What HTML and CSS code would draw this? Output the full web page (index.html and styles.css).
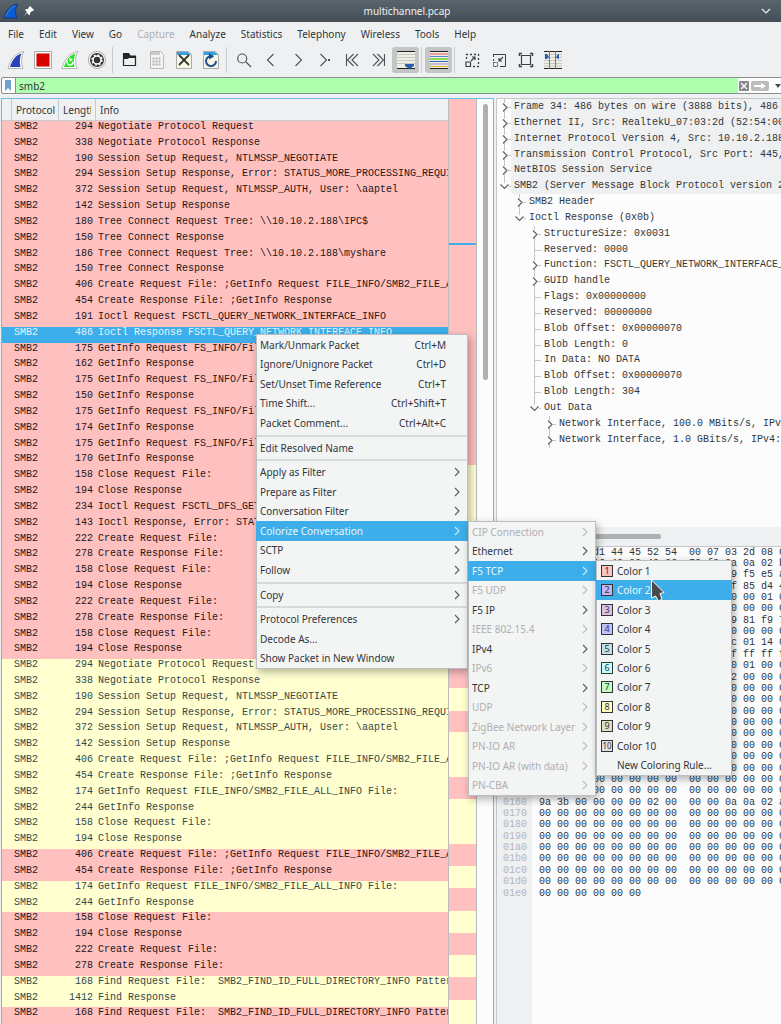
FILE: index.html
```html
<!DOCTYPE html>
<html lang="en">
<head>
    <meta charset="UTF-8">
    <title>multichannel.pcap</title>
    <link rel="stylesheet" href="styles.css">
</head>
<body>
<svg class="defs" aria-hidden="true">
    <symbol id="chev" viewBox="0 0 8 10"><path d="M2 1l4 4-4 4" fill="none" stroke="currentColor" stroke-width="1.1"/></symbol>
    <symbol id="closed" viewBox="0 0 12 16"><path d="M5.5 0v4M5.5 12v4M9 8.500h3" stroke="#c4c6c8" fill="none"/><path d="M4 4.500l4 4-4 4" fill="none" stroke="#5b6166" stroke-width="1.1"/></symbol>
    <symbol id="open" viewBox="0 0 12 16"><path d="M5.500 0v5M10 8.500h2" stroke="#c4c6c8" fill="none"/><path d="M1.500 6.500l4 4 4-4" fill="none" stroke="#5b6166" stroke-width="1.100"/></symbol>
    <symbol id="leaf" viewBox="0 0 12 16"><path d="M5.500 0v16M6 8.500h6" stroke="#c4c6c8" fill="none"/></symbol>
</svg>
<div class="window">
    <header class="title">
        <div class="title-left">
            <svg width="16" height="16" viewBox="0 0 16 16"><path d="M1 15C3 8 7 2 15 1c-3 4-3 9-1 14z" fill="#0d5bd0" stroke="#123a86"/><path d="M3 13C5 8 8 4 12 3" stroke="#3d92f2" fill="none"/></svg>
            <svg width="10" height="10" viewBox="0 0 10 10"><path d="M6 0l4 4-1 1-1 0-2 2 0 2-1 0-2-2-3 3 3-4-2-2 1-1 2 0 1-2z" fill="#fcfcfc"/></svg>
        </div>
        <span>multichannel.pcap</span>
        <svg width="10" height="8" viewBox="0 0 10 8"><path d="M1 2l4 4 4-4" fill="none" stroke="#eff0f1" stroke-width="1.200"/></svg>
    </header>

    <nav class="menubar">
        <button>File</button>
        <button>Edit</button>
        <button>View</button>
        <button>Go</button>
        <button disabled>Capture</button>
        <button>Analyze</button>
        <button>Statistics</button>
        <button>Telephony</button>
        <button>Wireless</button>
        <button>Tools</button>
        <button>Help</button>
    </nav>

    <div class="toolbar">
        <button aria-label="Start"><svg viewBox="0 0 20 20"><path d="M2 18.500C4 10 9 3 18 1.500c-3 5-3 11-1 17z" fill="#fff" stroke="#b5b5b5"/><path d="M4 17C6 10 10 5 15.500 3.500c-2 4-2 9-1 13.500z" fill="#2743b8"/></svg></button>
        <button aria-label="Stop"><svg viewBox="0 0 20 20"><path d="M1.500 1.500h17v17h-17z" fill="#f8f8f8" stroke="#aaa"/><path d="M3.500 3.500h13v13h-13z" fill="#d90000"/></svg></button>
        <button aria-label="Restart"><svg viewBox="0 0 20 20"><path d="M2 18.500C4 10 9 3 18 1.500c-3 5-3 11-1 17z" fill="#fff" stroke="#b5b5b5"/><path d="M4 17C6 10 10 5 15.500 3.500c-2 4-2 9-1 13.500z" fill="#1ee61e"/><path d="M7.500 10.500a3 3 0 1 0 5.500 1" fill="none" stroke="#fff" stroke-width="1.600"/><path d="M9 8l4 1-3 3z" fill="#fff"/></svg></button>
        <button aria-label="Options"><svg viewBox="0 0 20 20"><circle cx="10" cy="10" r="8.500" fill="#fff" stroke="#aaa"/><circle cx="10" cy="10" r="7" fill="#333"/><circle cx="10" cy="10" r="4" fill="none" stroke="#fff" stroke-width="1.500"/><circle cx="10" cy="10" r="5" fill="none" stroke="#fff" stroke-width="1.500" stroke-dasharray="1.900 2.027"/></svg></button>
        <i></i>
        <button aria-label="Open"><svg viewBox="0 0 20 20"><path d="M3.500 3v12.500h12V6.500h-6l-1.500-3H3.500" fill="none" stroke="#232627" stroke-width="1.200"/><path d="M3 3h6l1.500 2.500H16v2.500H9L7.500 9H3z" fill="#232627"/></svg></button>
        <button aria-label="Save" disabled><svg viewBox="0 0 20 20"><path d="M3.500 1.500h10l3 3v14h-13z" fill="#f4f4f4" stroke="#b8b8b8"/><path d="M4 2h9v3H4z" fill="#ccc"/><path d="M5.500 8.500h9M5.500 11.500h9M5.500 14.500h9" stroke="#b5b5b5" stroke-width="2" stroke-dasharray="2 1"/></svg></button>
        <button aria-label="Close"><svg viewBox="0 0 20 20"><path d="M2.500 1.500h12l3 3v14h-15z" fill="#f7f7e6" stroke="#aaa"/><path d="M3 2h11l3 3H3z" fill="#36a0e0"/><path d="M5 5l10 10M15 5L5 15" stroke="#333" stroke-width="1.800"/></svg></button>
        <button aria-label="Reload"><svg viewBox="0 0 20 20"><path d="M2.500 1.500h12l3 3v14h-15z" fill="#f7f7e6" stroke="#aaa"/><path d="M3 2h11l3 3H3z" fill="#36a0e0"/><path d="M12 6.500A5 5 0 1 0 15 11" fill="none" stroke="#1f4e8c" stroke-width="2"/><path d="M8 3l5 3.500-5 3z" fill="#1f4e8c"/></svg></button>
        <i></i>
        <button aria-label="Find"><svg viewBox="0 0 20 20"><path d="M12 12l5 5M12.700 8.500a4.500 4.500 0 1 1-9 0 4.500 4.500 0 0 1 9 0" fill="none" stroke="#4d5256" stroke-width="1.200"/></svg></button>
        <button aria-label="Previous"><svg viewBox="0 0 20 20"><path d="M12.500 4l-6 6 6 6" fill="none" stroke="#4d5256" stroke-width="1.100"/></svg></button>
        <button aria-label="Next"><svg viewBox="0 0 20 20"><path d="M7.500 4l6 6-6 6" fill="none" stroke="#4d5256" stroke-width="1.100"/></svg></button>
        <button aria-label="Go to packet"><svg viewBox="0 0 20 20"><path d="M5.500 4l6 6-6 6" fill="none" stroke="#4d5256" stroke-width="1.100"/><path d="M13 9h2v2h-2z" fill="#4d5256"/></svg></button>
        <button aria-label="First"><svg viewBox="0 0 20 20"><path d="M4.500 4v12M11.500 4l-6 6 6 6M16 4l-6 6 6 6" fill="none" stroke="#4d5256" stroke-width="1.100"/></svg></button>
        <button aria-label="Last"><svg viewBox="0 0 20 20"><path d="M15.500 4v12M8.500 4l6 6-6 6M4 4l6 6-6 6" fill="none" stroke="#4d5256" stroke-width="1.100"/></svg></button>
        <button aria-label="Auto scroll" class="on"><svg viewBox="0 0 20 20"><path d="M1 1h18v18H1z" fill="#eeeee8"/><path d="M1 1.500h18M1 18.500h18" stroke="#222"/><path d="M1 4.500h18M1 7.500h18M1 10.500h18M1 13.500h18" stroke="#c8c9c0"/><path d="M9 14h9v2l-4.500 3L9 16z" fill="#2a5fae"/></svg></button>
        <i></i>
        <button aria-label="Colorize" class="on"><svg viewBox="0 0 20 20"><path d="M1 1h18v18H1z" fill="#eeeee8"/><path d="M1 1.500h18M1 18.500h18" stroke="#222"/><path d="M1 4h18" stroke="#ef5050"/><path d="M1 6.500h18" stroke="#5a86d8"/><path d="M1 9h18" stroke="#6fd21f" stroke-width="1.500"/><path d="M1 11.500h18" stroke="#3465c4"/><path d="M1 14h18" stroke="#a88bc0"/><path d="M1 16.500h18" stroke="#d8b020"/></svg></button>
        <i></i>
        <button aria-label="Zoom in"><svg viewBox="0 0 20 20"><path d="M4.500 9V4.500H16.500V16.500H11" fill="none" stroke="#3c4144" stroke-width="1.300" stroke-dasharray="2 2"/><path d="M4 12h4.500v4.500H4zM9 11l4-4M10 7h3v3" fill="none" stroke="#3c4144" stroke-width="1.200"/></svg></button>
        <button aria-label="Zoom out"><svg viewBox="0 0 20 20"><path d="M4 4.500h12.500v12H11" fill="none" stroke="#3c4144"/><path d="M4.500 5v6" stroke="#3c4144" stroke-dasharray="2 2"/><path d="M4.500 12.500h4v4h-4z" fill="none" stroke="#3c4144" stroke-dasharray="2 1"/><path d="M14 7l-4 4M10 8v3h3" fill="none" stroke="#3c4144" stroke-width="1.200"/></svg></button>
        <button aria-label="Normal size"><svg viewBox="0 0 20 20"><path d="M5.500 5.500h9v9h-9z" fill="none" stroke="#3c4144" stroke-width="1.200"/><path d="M3.500 6v-2.500H6M14 3.500h2.500V6M16.500 14v2.500H14M6 16.500H3.500V14" fill="none" stroke="#3c4144" stroke-width="1.500"/></svg></button>
        <button aria-label="Resize columns"><svg viewBox="0 0 20 20"><path d="M1 1h18v18H1z" fill="#eeeee8"/><path d="M1 1.500h18M1 18.500h18" stroke="#222"/><path d="M1 4.500h18M1 7.500h18M1 10.500h18M1 13.500h18M1 16h18" stroke="#c8c9c0"/><path d="M6.500 1v18M12.500 1v18" stroke="#777"/><path d="M2 4h2l2 3-2 2H2zM16 4h-1l-2 3 2 2h1z" fill="#2a5fae"/></svg></button>
    </div>

    <div class="filter">
        <button class="bookmark" aria-label="Bookmarks"><svg width="8" height="12" viewBox="0 0 8 12"><path d="M1 0h6v11L4 8l-3 3z" fill="#729fcf"/></svg></button>
        <input type="text" value="smb2" aria-label="Display filter">
        <button aria-label="Clear"><svg width="12" height="12" viewBox="0 0 12 12"><rect x="1" y="1" width="10" height="10" rx="1" fill="#85888a"/><path d="M3 3l6 6M9 3l-6 6" stroke="#fff" stroke-width="1.300"/></svg></button>
        <button aria-label="Apply"><svg width="20" height="12" viewBox="0 0 20 12"><rect x="1" y="1" width="18" height="10" rx="2" fill="#babcbe"/><path d="M4 5h7V3l5 3-5 3V7H4z" fill="#fff"/></svg></button>
        <button class="recent" aria-label="Recent filters"><svg width="6" height="4" viewBox="0 0 6 4"><path d="M0 0h6L3 4z" fill="#4d4d4d"/></svg></button>
    </div>

    <main class="panes">
        <section class="packets">
            <div class="list">
                <table>
                    <colgroup><col class="c-mark"><col class="c-proto"><col class="c-len"><col></colgroup>
                    <thead>
                    <tr><th></th><th>Protocol</th><th><div>Length</div></th><th>Info</th></tr>
                    </thead>
                    <tbody>
                    <tr><td></td><td>SMB2</td><td>294</td><td>Negotiate Protocol Request</td></tr>
                    <tr><td></td><td>SMB2</td><td>338</td><td>Negotiate Protocol Response</td></tr>
                    <tr><td></td><td>SMB2</td><td>190</td><td>Session Setup Request, NTLMSSP_NEGOTIATE</td></tr>
                    <tr><td></td><td>SMB2</td><td>294</td><td>Session Setup Response, Error: STATUS_MORE_PROCESSING_REQUIRED</td></tr>
                    <tr><td></td><td>SMB2</td><td>372</td><td>Session Setup Request, NTLMSSP_AUTH, User: \aaptel</td></tr>
                    <tr><td></td><td>SMB2</td><td>142</td><td>Session Setup Response</td></tr>
                    <tr><td></td><td>SMB2</td><td>180</td><td>Tree Connect Request Tree: \\10.10.2.188\IPC$</td></tr>
                    <tr><td></td><td>SMB2</td><td>150</td><td>Tree Connect Response</td></tr>
                    <tr><td></td><td>SMB2</td><td>186</td><td>Tree Connect Request Tree: \\10.10.2.188\myshare</td></tr>
                    <tr><td></td><td>SMB2</td><td>150</td><td>Tree Connect Response</td></tr>
                    <tr><td></td><td>SMB2</td><td>406</td><td>Create Request File: ;GetInfo Request FILE_INFO/SMB2_FILE_ALL_INFO</td></tr>
                    <tr><td></td><td>SMB2</td><td>454</td><td>Create Response File: ;GetInfo Response</td></tr>
                    <tr><td></td><td>SMB2</td><td>191</td><td>Ioctl Request FSCTL_QUERY_NETWORK_INTERFACE_INFO</td></tr>
                    <tr class="selected"><td></td><td>SMB2</td><td>486</td><td>Ioctl Response FSCTL_QUERY_NETWORK_INTERFACE_INFO</td></tr>
                    <tr><td></td><td>SMB2</td><td>175</td><td>GetInfo Request FS_INFO/FileFsVolumeInformation</td></tr>
                    <tr><td></td><td>SMB2</td><td>162</td><td>GetInfo Response</td></tr>
                    <tr><td></td><td>SMB2</td><td>175</td><td>GetInfo Request FS_INFO/FileFsVolumeInformation</td></tr>
                    <tr><td></td><td>SMB2</td><td>150</td><td>GetInfo Response</td></tr>
                    <tr><td></td><td>SMB2</td><td>175</td><td>GetInfo Request FS_INFO/FileFsVolumeInformation</td></tr>
                    <tr><td></td><td>SMB2</td><td>174</td><td>GetInfo Response</td></tr>
                    <tr><td></td><td>SMB2</td><td>175</td><td>GetInfo Request FS_INFO/FileFsVolumeInformation</td></tr>
                    <tr><td></td><td>SMB2</td><td>170</td><td>GetInfo Response</td></tr>
                    <tr><td></td><td>SMB2</td><td>158</td><td>Close Request File:</td></tr>
                    <tr><td></td><td>SMB2</td><td>194</td><td>Close Response</td></tr>
                    <tr><td></td><td>SMB2</td><td>234</td><td>Ioctl Request FSCTL_DFS_GET_REFERRALS</td></tr>
                    <tr><td></td><td>SMB2</td><td>143</td><td>Ioctl Response, Error: STATUS_NOT_FOUND</td></tr>
                    <tr><td></td><td>SMB2</td><td>222</td><td>Create Request File:</td></tr>
                    <tr><td></td><td>SMB2</td><td>278</td><td>Create Response File:</td></tr>
                    <tr><td></td><td>SMB2</td><td>158</td><td>Close Request File:</td></tr>
                    <tr><td></td><td>SMB2</td><td>194</td><td>Close Response</td></tr>
                    <tr><td></td><td>SMB2</td><td>222</td><td>Create Request File:</td></tr>
                    <tr><td></td><td>SMB2</td><td>278</td><td>Create Response File:</td></tr>
                    <tr><td></td><td>SMB2</td><td>158</td><td>Close Request File:</td></tr>
                    <tr><td></td><td>SMB2</td><td>194</td><td>Close Response</td></tr>
                    <tr class="alt"><td></td><td>SMB2</td><td>294</td><td>Negotiate Protocol Request</td></tr>
                    <tr class="alt"><td></td><td>SMB2</td><td>338</td><td>Negotiate Protocol Response</td></tr>
                    <tr class="alt"><td></td><td>SMB2</td><td>190</td><td>Session Setup Request, NTLMSSP_NEGOTIATE</td></tr>
                    <tr class="alt"><td></td><td>SMB2</td><td>294</td><td>Session Setup Response, Error: STATUS_MORE_PROCESSING_REQUIRED</td></tr>
                    <tr class="alt"><td></td><td>SMB2</td><td>372</td><td>Session Setup Request, NTLMSSP_AUTH, User: \aaptel</td></tr>
                    <tr class="alt"><td></td><td>SMB2</td><td>142</td><td>Session Setup Response</td></tr>
                    <tr class="alt"><td></td><td>SMB2</td><td>406</td><td>Create Request File: ;GetInfo Request FILE_INFO/SMB2_FILE_ALL_INFO</td></tr>
                    <tr class="alt"><td></td><td>SMB2</td><td>454</td><td>Create Response File: ;GetInfo Response</td></tr>
                    <tr class="alt"><td></td><td>SMB2</td><td>174</td><td>GetInfo Request FILE_INFO/SMB2_FILE_ALL_INFO File:</td></tr>
                    <tr class="alt"><td></td><td>SMB2</td><td>244</td><td>GetInfo Response</td></tr>
                    <tr class="alt"><td></td><td>SMB2</td><td>158</td><td>Close Request File:</td></tr>
                    <tr class="alt"><td></td><td>SMB2</td><td>194</td><td>Close Response</td></tr>
                    <tr><td></td><td>SMB2</td><td>406</td><td>Create Request File: ;GetInfo Request FILE_INFO/SMB2_FILE_ALL_INFO</td></tr>
                    <tr><td></td><td>SMB2</td><td>454</td><td>Create Response File: ;GetInfo Response</td></tr>
                    <tr class="alt"><td></td><td>SMB2</td><td>174</td><td>GetInfo Request FILE_INFO/SMB2_FILE_ALL_INFO File:</td></tr>
                    <tr class="alt"><td></td><td>SMB2</td><td>244</td><td>GetInfo Response</td></tr>
                    <tr><td></td><td>SMB2</td><td>158</td><td>Close Request File:</td></tr>
                    <tr><td></td><td>SMB2</td><td>194</td><td>Close Response</td></tr>
                    <tr><td></td><td>SMB2</td><td>222</td><td>Create Request File:</td></tr>
                    <tr><td></td><td>SMB2</td><td>278</td><td>Create Response File:</td></tr>
                    <tr class="alt"><td></td><td>SMB2</td><td>168</td><td>Find Request File:  SMB2_FIND_ID_FULL_DIRECTORY_INFO Pattern: *</td></tr>
                    <tr class="alt"><td></td><td>SMB2</td><td>1412</td><td>Find Response</td></tr>
                    <tr><td></td><td>SMB2</td><td>168</td><td>Find Request File:  SMB2_FIND_ID_FULL_DIRECTORY_INFO Pattern: *</td></tr>
                    </tbody>
                </table>
            </div>
            <div class="minimap"></div>
            <div class="scroll"><div class="thumb"></div></div>
        </section>

        <section class="details">
            <ul class="tree">
                <li class="top"><svg><use href="#closed"/></svg><span>Frame 34: 486 bytes on wire (3888 bits), 486 bytes captured</span></li>
                <li class="top"><svg><use href="#closed"/></svg><span>Ethernet II, Src: RealtekU_07:03:2d (52:54:00:07:03:2d)</span></li>
                <li class="top"><svg><use href="#closed"/></svg><span>Internet Protocol Version 4, Src: 10.10.2.188, Dst: 10.10.2.1</span></li>
                <li class="top"><svg><use href="#closed"/></svg><span>Transmission Control Protocol, Src Port: 445, Dst Port: 52</span></li>
                <li class="top"><svg><use href="#closed"/></svg><span>NetBIOS Session Service</span></li>
                <li class="top"><svg><use href="#open"/></svg><span>SMB2 (Server Message Block Protocol version 2)</span></li>
                <li class="l1"><svg><use href="#closed"/></svg><span>SMB2 Header</span></li>
                <li class="l1"><svg><use href="#open"/></svg><span>Ioctl Response (0x0b)</span></li>
                <li class="l2"><svg><use href="#closed"/></svg><span>StructureSize: 0x0031</span></li>
                <li class="l2"><svg><use href="#leaf"/></svg><span>Reserved: 0000</span></li>
                <li class="l2"><svg><use href="#closed"/></svg><span>Function: FSCTL_QUERY_NETWORK_INTERFACE_INFO</span></li>
                <li class="l2"><svg><use href="#closed"/></svg><span>GUID handle</span></li>
                <li class="l2"><svg><use href="#leaf"/></svg><span>Flags: 0x00000000</span></li>
                <li class="l2"><svg><use href="#leaf"/></svg><span>Reserved: 00000000</span></li>
                <li class="l2"><svg><use href="#leaf"/></svg><span>Blob Offset: 0x00000070</span></li>
                <li class="l2"><svg><use href="#leaf"/></svg><span>Blob Length: 0</span></li>
                <li class="l2"><svg><use href="#leaf"/></svg><span>In Data: NO DATA</span></li>
                <li class="l2"><svg><use href="#leaf"/></svg><span>Blob Offset: 0x00000070</span></li>
                <li class="l2"><svg><use href="#leaf"/></svg><span>Blob Length: 304</span></li>
                <li class="l2"><svg><use href="#open"/></svg><span>Out Data</span></li>
                <li class="l3"><svg><use href="#closed"/></svg><span>Network Interface, 100.0 MBits/s, IPv4: 10.10.2.1</span></li>
                <li class="l3"><svg><use href="#closed"/></svg><span>Network Interface, 1.0 GBits/s, IPv4: 10.10.2.1</span></li>
            </ul>
            <div class="hscroll"><div class="thumb"></div></div>
            <div class="hex">
                <div><b>0000</b>52 54 00 d1 44 45 52 54  00 07 03 2d 08 00 45 00</div>
                <div><b>0010</b>01 d8 c4 16 40 00 40 06  72 f2 0a 0a 02 bc 0a 0a</div>
                <div><b>0020</b>02 01 01 bd a1 5e 8b 2c  11 30 49 f5 e5 a0 80 18</div>
                <div><b>0030</b>00 eb 1b 5f 00 00 01 01  08 0a 9f 85 d4 4b 1c 05</div>
                <div><b>0040</b>00 00 00 00 01 a0 fe 53  4d 42 40 00 01 00 00 00</div>
                <div><b>0050</b>00 00 0b 00 01 00 01 00  00 00 00 00 00 00 06 00</div>
                <div><b>0060</b>00 00 00 00 00 00 b2 0d  00 00 39 81 f9 70 00 00</div>
                <div><b>0070</b>00 00 00 00 00 00 00 00  00 00 00 00 00 00 00 00</div>
                <div><b>0080</b>00 00 00 00 00 00 31 00  00 00 fc 01 14 00 ff ff</div>
                <div><b>0090</b>ff ff ff ff ff ff ff ff  ff ff ff ff ff ff 70 00</div>
                <div><b>00a0</b>00 00 00 00 00 00 70 00  00 00 30 01 00 00 00 00</div>
                <div><b>00b0</b>00 00 00 00 00 00 98 00  00 00 02 00 00 00 00 00</div>
                <div><b>00c0</b>00 00 00 00 00 00 00 00  00 00 00 00 00 00 00 00</div>
                <div><b>00d0</b>00 00 00 00 00 00 00 00  00 00 00 00 00 00 00 00</div>
                <div><b>00e0</b>00 00 00 00 00 00 00 00  00 00 00 00 00 00 00 00</div>
                <div><b>00f0</b>00 00 00 00 00 00 00 00  00 00 00 00 00 00 00 00</div>
                <div><b>0100</b>00 00 00 00 00 00 00 00  00 00 00 00 00 00 00 00</div>
                <div><b>0110</b>00 00 00 00 00 00 00 00  00 00 00 00 00 00 00 00</div>
                <div><b>0120</b>00 00 00 00 00 00 00 00  00 00 00 00 00 00 00 00</div>
                <div><b>0130</b>00 00 00 00 00 00 00 00  00 00 00 00 00 00 00 00</div>
                <div><b>0140</b>00 00 00 00 00 00 00 00  00 00 00 00 00 00 00 00</div>
                <div><b>0150</b>00 00 00 00 00 00 00 00  00 00 00 00 00 00 00 00</div>
                <div><b>0160</b>9a 3b 00 00 00 00 02 00  00 00 0a 0a 02 a1 00 00</div>
                <div><b>0170</b>00 00 00 00 00 00 00 00  00 00 00 00 00 00 00 00</div>
                <div><b>0180</b>00 00 00 00 00 00 00 00  00 00 00 00 00 00 00 00</div>
                <div><b>0190</b>00 00 00 00 00 00 00 00  00 00 00 00 00 00 00 00</div>
                <div><b>01a0</b>00 00 00 00 00 00 00 00  00 00 00 00 00 00 00 00</div>
                <div><b>01b0</b>00 00 00 00 00 00 00 00  00 00 00 00 00 00 00 00</div>
                <div><b>01c0</b>00 00 00 00 00 00 00 00  00 00 00 00 00 00 00 00</div>
                <div><b>01d0</b>00 00 00 00 00 00 00 00  00 00 00 00 00 00 00 00</div>
                <div><b>01e0</b>00 00 00 00 00 00</div>
            </div>
        </section>
    </main>
</div>

<div class="menu context">
    <button>Mark/Unmark Packet<kbd>Ctrl+M</kbd></button>
    <button>Ignore/Unignore Packet<kbd>Ctrl+D</kbd></button>
    <button>Set/Unset Time Reference<kbd>Ctrl+T</kbd></button>
    <button>Time Shift...<kbd>Ctrl+Shift+T</kbd></button>
    <button>Packet Comment...<kbd>Ctrl+Alt+C</kbd></button>
    <hr>
    <button>Edit Resolved Name</button>
    <hr>
    <button>Apply as Filter<svg><use href="#chev"/></svg></button>
    <button>Prepare as Filter<svg><use href="#chev"/></svg></button>
    <button>Conversation Filter<svg><use href="#chev"/></svg></button>
    <button class="active">Colorize Conversation<svg><use href="#chev"/></svg></button>
    <button>SCTP<svg><use href="#chev"/></svg></button>
    <button>Follow<svg><use href="#chev"/></svg></button>
    <hr>
    <button>Copy<svg><use href="#chev"/></svg></button>
    <hr>
    <button>Protocol Preferences<svg><use href="#chev"/></svg></button>
    <button>Decode As...</button>
    <button>Show Packet in New Window</button>
</div>

<div class="menu protocols">
    <button disabled>CIP Connection<svg><use href="#chev"/></svg></button>
    <button>Ethernet<svg><use href="#chev"/></svg></button>
    <button class="active">F5 TCP<svg><use href="#chev"/></svg></button>
    <button disabled>F5 UDP<svg><use href="#chev"/></svg></button>
    <button>F5 IP<svg><use href="#chev"/></svg></button>
    <button disabled>IEEE 802.15.4<svg><use href="#chev"/></svg></button>
    <button>IPv4<svg><use href="#chev"/></svg></button>
    <button disabled>IPv6<svg><use href="#chev"/></svg></button>
    <button>TCP<svg><use href="#chev"/></svg></button>
    <button disabled>UDP<svg><use href="#chev"/></svg></button>
    <button disabled>ZigBee Network Layer<svg><use href="#chev"/></svg></button>
    <button disabled>PN-IO AR<svg><use href="#chev"/></svg></button>
    <button disabled>PN-IO AR (with data)<svg><use href="#chev"/></svg></button>
    <button disabled>PN-CBA<svg><use href="#chev"/></svg></button>
</div>

<div class="menu colors">
    <button><i class="c1">1</i>Color 1</button>
    <button class="active"><i class="c2">2</i>Color 2</button>
    <button><i class="c3">3</i>Color 3</button>
    <button><i class="c4">4</i>Color 4</button>
    <button><i class="c5">5</i>Color 5</button>
    <button><i class="c6">6</i>Color 6</button>
    <button><i class="c7">7</i>Color 7</button>
    <button><i class="c8">8</i>Color 8</button>
    <button><i class="c9">9</i>Color 9</button>
    <button><i class="c10">10</i>Color 10</button>
    <button class="plain">New Coloring Rule...</button>
</div>
<svg class="pointer" width="16" height="24" viewBox="0 0 16 24"><path d="M1.500 1L14 13.500l-4 1 2 5.500-3.500 2-3-5-4 2z" fill="#4a4a4a" stroke="#fff"/></svg>
</body>
</html>
```
FILE: styles.css
```css
* {
    box-sizing: border-box;
}

body {
    margin: 0;
    overflow: hidden;
    color: #31363b;
    background: #eff0f1;
    font-family: "Noto Sans", sans-serif;
    font-size: 10px;
}

button {
    border: 0;
    margin: 0;
    padding: 0;
    background: none;
    color: inherit;
    font: inherit;
}

button:disabled {
    color: #aeb0b2;
}

.defs {
    display: none;
}

.window {
    display: flex;
    flex-direction: column;
    height: 100vh;
    position: relative;
}

.title {
    display: flex;
    align-items: center;
    height: 22px;
    padding: 0 10px 0 3px;
    color: #eff0f1;
    background: linear-gradient(#59646c, #454e56);
}

.title-left {
    display: flex;
    align-items: center;
    gap: 5px;
    width: 50px;
}

.title span {
    flex: 1;
    text-align: center;
}

.menubar {
    display: flex;
    align-items: center;
    height: 23px;
    padding: 0 8px;
    gap: 15px;
}

.toolbar {
    display: flex;
    align-items: center;
    height: 30px;
    padding: 0 2px;
}

.toolbar button {
    display: flex;
    align-items: center;
    justify-content: center;
    width: 27px;
    height: 26px;
    border-radius: 3px;
}

.toolbar .on {
    background: #c3c5c6;
}

.toolbar svg {
    width: 20px;
    height: 20px;
}

.toolbar i {
    width: 1px;
    height: 26px;
    margin: 0 3px 0 2px;
    background: #c9cbcc;
}

.filter {
    display: flex;
    align-items: center;
    height: 17px;
    margin: 2px -8px 4px 1px;
    border: 1px solid #8b8e90;
    border-radius: 2px;
    background: #fcfcfc;
}

.filter button {
    display: flex;
    align-items: center;
}

.filter .bookmark {
    width: 14px;
    height: 15px;
    padding-left: 2px;
    border-right: 1px solid #8b8e90;
}

.filter input {
    flex: 1;
    min-width: 0;
    height: 15px;
    margin: 0;
    padding: 0 3px;
    border: 0;
    outline: none;
    color: #31363b;
    background: #afffaf;
    font: inherit;
}

.filter .recent {
    padding: 0 7px 0 5px;
}

.panes {
    display: grid;
    grid-template-columns: 494fr 287fr;
    flex: 1;
    min-height: 0;
}

.packets {
    display: flex;
    min-width: 0;
    min-height: 0;
    margin-left: 1px;
    border: 1px solid #6cbcea;
    border-bottom: 0;
    background: #fcfcfc;
}

.list {
    flex: 1;
    min-width: 0;
    overflow: hidden;
}

table {
    width: 100%;
    height: 100%;
    table-layout: fixed;
    border-collapse: separate;
    border-spacing: 0;
}

.c-mark {
    width: 10px;
}

.c-proto {
    width: 47px;
}

.c-len {
    width: 37px;
}

th {
    height: 22px;
    padding: 0 4px;
    overflow: hidden;
    border-right: 1px solid #c9cbcc;
    border-bottom: 1px solid #c9cbcc;
    background: #eff0f1;
    font-weight: 400;
    text-align: left;
}

th div {
    overflow: hidden;
}

th:first-child {
    padding: 0;
}

th:last-child {
    border-right: 0;
}

td {
    padding: 0 0 0 2px;
    overflow: hidden;
    background: #ffc0c0;
    color: #221818;
    vertical-align: top;
    white-space: pre;
}

td,
.tree,
.hex {
    font-family: "Liberation Mono", monospace;
    font-size: 10px;
    line-height: 11px;
}

td:first-child {
    padding: 0;
}

td:nth-child(3) {
    padding-right: 3px;
    text-align: right;
}

.alt td {
    background: #ffffd0;
    color: #34484c;
}

.selected td {
    background: #3daee9;
    color: #e4f4fc;
}

/* one band for each run of conversations, the mark shows the current packet */
.minimap {
    width: 29px;
    border: solid #b9bbbd;
    border-width: 0 1px;
    background: linear-gradient(#ffc0c0 144px, #3daee9 144px 146px, #ffc0c0 146px 366px,
        #ffffd0 366px 500px, #ffc0c0 500px 589px, #ffffd0 589px 612px, #ffc0c0 612px 633px,
        #ffffd0 633px 678px, #ffc0c0 678px 700px, #ffffd0 700px 745px, #ffc0c0 745px 767px,
        #ffffd0 767px 789px, #ffc0c0 789px 812px, #ffffd0 812px 834px, #ffc0c0 834px 856px,
        #ffffd0 856px 878px, #ffc0c0 878px 901px, #ffffd0 901px);
}

.scroll {
    width: 16px;
    padding: 5px 5px 0 6px;
}

.scroll .thumb {
    height: 30%;
    border-radius: 3px;
    background: #aeb0b1;
}

.details {
    display: flex;
    flex-direction: column;
    min-width: 0;
    min-height: 0;
    margin-left: 2px;
    border-left: 1px solid #c4c6c8;
    background: #fcfcfc;
}

.tree {
    display: grid;
    grid-template-rows: repeat(27, 1fr);
    flex: 428;
    min-height: 0;
    margin: 0;
    padding: 0 0 0 2px;
    border-top: 1px solid #c4c6c8;
    list-style: none;
    overflow: hidden;
}

.tree li {
    display: flex;
    min-width: 0;
    min-height: 0;
    white-space: pre;
}

.tree svg {
    flex: none;
    width: 12px;
    height: 16px;
}

.tree span {
    flex: 1;
    padding: 2px 0 0 3px;
}

.tree .top span {
    background: #eff0f1;
}

.tree .l1 {
    padding-left: 15px;
}

.tree .l2 {
    padding-left: 30px;
}

.tree .l3 {
    padding-left: 45px;
}

.hscroll {
    height: 20px;
    padding: 7px 0 0 4px;
    border-bottom: 1px solid #c4c6c8;
    background: #eff0f1;
}

.hscroll .thumb {
    width: 57%;
    height: 5px;
    border-radius: 3px;
    background: #aeb0b1;
}

.hex {
    display: grid;
    grid-template-rows: repeat(42, 1fr);
    flex: 478;
    min-height: 0;
    overflow: hidden;
    white-space: pre;
    background: linear-gradient(90deg, #eff0f1 35px, #fcfcfc 35px);
}

.hex b {
    display: inline-block;
    width: 42px;
    padding-left: 6px;
    color: #b4b6b8;
    font-weight: 400;
}

.menu {
    position: absolute;
    display: flex;
    flex-direction: column;
    border: 1px solid #bcbec0;
    background: #f3f4f4;
    box-shadow: 2px 3px 8px rgba(0, 0, 0, 0.3);
}

.menu button {
    display: flex;
    flex: 1;
    align-items: center;
    min-height: 0;
    padding: 0 6px 0 3px;
    line-height: 14px;
    white-space: nowrap;
}

.menu .active {
    margin: 0 -1px;
    padding: 0 7px 0 4px;
    background: #3daee9;
    color: #eaf6fd;
}

.menu svg {
    width: 8px;
    height: 10px;
    margin-left: auto;
    opacity: 0.8;
}

.menu hr {
    width: 100%;
    height: 2px;
    margin: 2px 0 1px;
    border: 0;
    background: #d8dadb;
}

.menu kbd {
    margin-left: auto;
    padding-right: 15px;
    font: inherit;
}

.context {
    left: 256px;
    top: 334px;
    width: 212px;
    height: 335px;
}

.protocols {
    left: 468px;
    top: 521px;
    width: 128px;
    height: 275px;
}

.colors {
    left: 596px;
    top: 560px;
    width: 136px;
    height: 216px;
}

.colors i {
    width: 12px;
    height: 12px;
    margin: 0 4px 0 1px;
    border: 1px solid #333;
    color: #31363b;
    font-size: 9px;
    font-style: normal;
    line-height: 10px;
    text-align: center;
}

.colors .plain {
    padding-left: 20px;
}

.c1 {
    background: #ffc0c0;
}

.c2 {
    background: #c0b4f4;
}

.c3 {
    background: #e0c0e0;
}

.c4 {
    background: #c0c0ff;
}

.c5 {
    background: #c0e0e0;
}

.c6 {
    background: #c0ffff;
}

.c7 {
    background: #c0ffc0;
}

.c8 {
    background: #ffffc0;
}

.c9 {
    background: #e0e0c0;
}

.colors .c10 {
    background: #e0e0e0;
    font-size: 8px;
}

.pointer {
    position: absolute;
    left: 650px;
    top: 579px;
}
```
